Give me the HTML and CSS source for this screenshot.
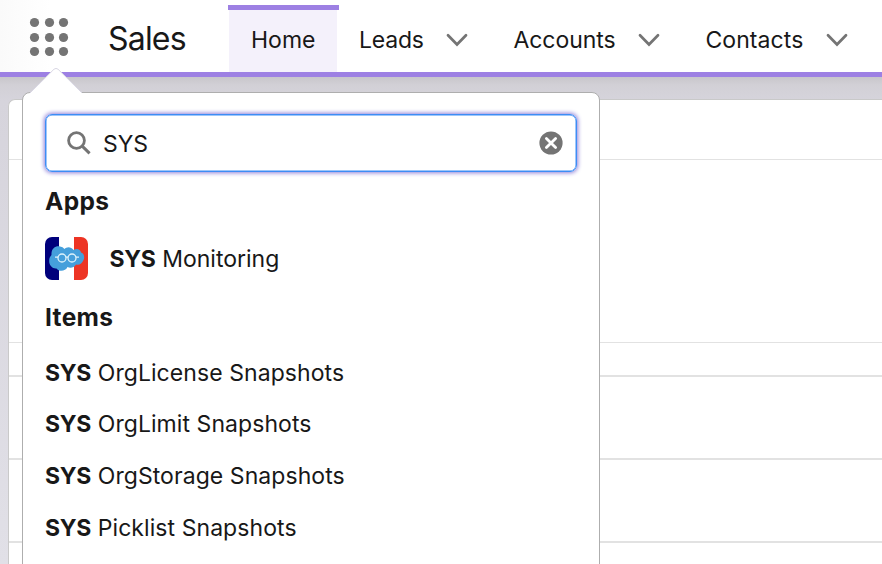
FILE: index.html
```html
<!DOCTYPE html>
<html lang="en">
<head>
<meta charset="utf-8">
<title>Sales</title>
<link rel="stylesheet" href="styles.css">
</head>
<body>
<header class="nav">
  <button class="launcher" aria-label="App Launcher">
    <svg width="40" height="40" viewBox="0 0 40 40" fill="#747474">
      <circle cx="5.5" cy="5.5" r="4.6"/><circle cx="20.5" cy="5.5" r="4.6"/><circle cx="34.5" cy="5.5" r="4.6"/>
      <circle cx="5.5" cy="20.5" r="4.6"/><circle cx="20.5" cy="20.5" r="4.6"/><circle cx="34.5" cy="20.5" r="4.6"/>
      <circle cx="5.5" cy="34.5" r="4.6"/><circle cx="20.5" cy="34.5" r="4.6"/><circle cx="34.5" cy="34.5" r="4.6"/>
    </svg>
  </button>
  <h1 class="app-name"><span>Sales</span></h1>
  <nav class="tabs">
    <a class="tab active"><span>Home</span></a>
    <a class="tab leads"><span>Leads</span><svg class="chev" viewBox="0 0 22 14"><path d="M2 2.2 11 11.5 20 2.2"/></svg></a>
    <a class="tab accounts"><span>Accounts</span><svg class="chev" viewBox="0 0 22 14"><path d="M2 2.2 11 11.5 20 2.2"/></svg></a>
    <a class="tab contacts"><span>Contacts</span><svg class="chev" viewBox="0 0 22 14"><path d="M2 2.2 11 11.5 20 2.2"/></svg></a>
  </nav>
</header>
<main class="page">
  <section class="card">
    <div class="row head"></div>
    <div class="row chart"></div>
    <div class="row labels"></div>
    <div class="row item"></div>
    <div class="row item"></div>
    <div class="row rest"></div>
  </section>
</main>
<aside class="panel">
  <svg class="nub" width="52" height="27" viewBox="0 0 52 27"><path d="M0 27V26L24 2.2Q26 .6 28 2.2L52 26V27Z" fill="#fff"/><path d="M0 26 24 2.2Q26 .6 28 2.2L52 26" fill="none" stroke="#d9d7e4" stroke-width="1"/></svg>
  <div class="search">
    <svg class="glass" width="24" height="24" viewBox="0 0 24 24" fill="none" stroke="#747474"><circle cx="9.5" cy="9.5" r="7.9" stroke-width="2.8"/><path d="M15.2 15.2 22.6 22.4" stroke-width="3"/></svg>
    <span class="query">SYS</span>
    <svg class="clear" width="24" height="24" viewBox="0 0 24 24"><circle cx="12" cy="12" r="11.6" fill="#747474"/><path d="M7.4 7.4 16.6 16.6M16.6 7.4 7.4 16.6" stroke="#fff" stroke-width="2.8" stroke-linecap="round"/></svg>
  </div>
  <h2 class="apps-title"><span>Apps</span></h2>
  <div class="app">
    <svg class="logo" width="43" height="43" viewBox="0 0 43 43">
      <defs><clipPath id="tile"><rect width="43" height="43" rx="7"/></clipPath></defs>
      <g clip-path="url(#tile)"><path fill="#fff" d="M0 0H43V43H0Z"/><path fill="#00007c" d="M0 0H14V43H0Z"/><path fill="#ed3424" d="M29 0H43V43H29Z"/></g>
      <path fill="#459fdb" d="M6.5 18C6 12 10 9 14 9.3 17 9.6 18.5 11 19.5 12 21.5 9.5 26 9.2 28.5 13 32 11 35.5 12.5 36 15.5 39 16.5 40 20 38.5 23 37 27 34 28.5 31 27.5 29 31 25 31.5 22.5 30 20.5 34.5 14 35 11.5 31.5 7.5 32 4 28.5 4.2 24 4.2 21 5 19.5 6.5 18Z"/>
      <g fill="none" stroke="#dff3fb" stroke-width="1.3"><circle cx="17" cy="21" r="4"/><circle cx="27" cy="21" r="4"/><path d="M10 20.2H13.2M20.9 20.2H23.1M30.9 20.2H34"/></g>
    </svg>
    <span class="label"><b>SYS</b> Monitoring</span>
  </div>
  <h2 class="items-title"><span>Items</span></h2>
  <ul class="items">
    <li><span class="label"><b>SYS</b> OrgLicense Snapshots</span></li>
    <li><span class="label"><b>SYS</b> OrgLimit Snapshots</span></li>
    <li><span class="label"><b>SYS</b> OrgStorage Snapshots</span></li>
    <li><span class="label"><b>SYS</b> Picklist Snapshots</span></li>
  </ul>
</aside>
</body>
</html>
```
FILE: styles.css
```css
* { box-sizing: border-box; }
body {
  margin: 0;
  height: 564px;
  overflow: hidden;
  display: flex;
  flex-direction: column;
  font-family: Inter, sans-serif;
  font-size: 23px;
  color: #181818;
}
.nav {
  flex: none;
  display: flex;
  height: 77px;
  border-bottom: 5px solid #9d80e3;
  background: linear-gradient(90deg, #fafafa, #fff 50px);
}
.launcher {
  width: 108px;
  padding: 17px 0 0 29px;
  border: 0;
  background: none;
  display: flex;
  align-items: flex-start;
}
.app-name {
  width: 121px;
  margin: 0;
  padding-top: 19px;
  font-size: 32px;
  line-height: 40px;
  font-weight: 400;
  letter-spacing: -0.8px;
}
.tabs { display: flex; }
.tab {
  display: flex;
  align-items: center;
  padding: 8px 0 0 22px;
  white-space: nowrap;
}
.tab.active {
  position: relative;
  width: 108px;
  margin-top: 5px;
  padding-top: 3px;
  background: #f4f1fb;
}
.tab.active::before {
  content: "";
  position: absolute;
  top: 0;
  left: -1px;
  width: 111px;
  height: 5px;
  background: #9d80e3;
}
.leads { width: 154.4px; letter-spacing: -0.2px; }
.accounts { width: 192px; letter-spacing: -0.05px; }
.contacts { width: 176px; letter-spacing: 0.1px; }
.chev {
  width: 22px;
  height: 14px;
  margin-left: auto;
  fill: none;
  stroke: #747474;
  stroke-width: 2.7;
  stroke-linecap: round;
}
.leads .chev, .accounts .chev { margin-right: 23px; }
.contacts .chev { margin-right: 11px; }
.page {
  flex: 1;
  min-height: 0;
  padding: 22px 0 0 8px;
  background: linear-gradient(#c8c6cb, #d2d0d6 8px, #d6d4dc 24px, #e1e0e7 100%);
}
.card {
  height: 100%;
  border: solid #c9c9c9;
  border-width: 1px 0 0 1px;
  border-top-left-radius: 7px;
  background: #fff;
}
.row { border-bottom: 1px solid #e2e2e2; }
.head { height: 60px; }
.chart { height: 183px; }
.labels { height: 34px; border-bottom-width: 2px; }
.item { height: 83px; border-bottom-width: 2px; }
.rest { border: 0; }
.panel {
  position: absolute;
  left: 22px;
  top: 92px;
  width: 578px;
  height: 490px;
  padding: 21px 21px 0 22px;
  border: 1px solid #aeaeae;
  border-radius: 8px;
  background: #fff;
}
.nub { position: absolute; left: 7px; top: -26px; }
.search {
  display: flex;
  align-items: center;
  width: 532px;
  height: 58px;
  padding: 0 13px 0 21px;
  border: 1px solid #3d8df5;
  border-radius: 7px;
  box-shadow: 0 0 4px 1px #8f80d8, inset 0 0 0 0.5px #3d8df5;
}
.query { margin-left: 12px; padding-top: 1px; }
.clear { margin-left: auto; }
h2 { margin: 0; font-size: 24.5px; line-height: 30px; font-weight: 700; letter-spacing: 0.35px; }
.apps-title { margin-top: 14px; }
.app {
  display: flex;
  align-items: center;
  height: 43px;
  margin-top: 21px;
  gap: 21.5px;
}
.items-title { margin-top: 22px; }
.label { white-space: nowrap; }
b { font-weight: 700; letter-spacing: -0.25px; }
.items { list-style: none; margin: 15px 0 0; padding: 0; }
.items li { height: 51.6px; display: flex; align-items: center; letter-spacing: 0.07px; }
```
